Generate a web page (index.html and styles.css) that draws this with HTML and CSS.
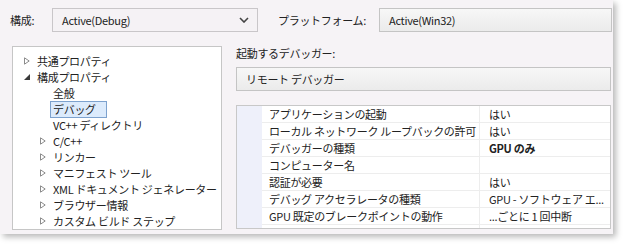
FILE: index.html
```html
<!DOCTYPE html>
<html lang="ja">
<head>
<meta charset="utf-8">
<link rel="stylesheet" href="styles.css">
</head>
<body>
<div class="dialog">
  <div class="toprow">
    <span class="lbl lbl-config">構成:</span>
    <div class="combo combo-config">
      <span>Active(Debug)</span>
      <svg class="chev" width="10" height="6" viewBox="0 0 10 6"><path d="M1 1 L5 5 L9 1" fill="none" stroke="#444" stroke-width="1.6"/></svg>
    </div>
    <span class="lbl lbl-platform">プラットフォーム:</span>
    <div class="combo combo-platform"><span>Active(Win32)</span></div>
  </div>
  <div class="main">
    <div class="tree">
      <div class="node l1"><svg class="tri" width="6" height="8" viewBox="0 0 6 8"><path d="M0.5 0.8 L5.2 4 L0.5 7.2 Z" fill="none" stroke="#8c8c8c" stroke-width="1"/></svg><span>共通プロパティ</span></div>
      <div class="node l1"><svg class="tri" width="6" height="8" viewBox="0 0 6 8"><path d="M0 7 L6 7 L6 1 Z" fill="#3a3a3a"/></svg><span>構成プロパティ</span></div>
      <div class="node l2 leaf"><span>全般</span></div>
      <div class="node l2 leaf"><span class="sel">デバッグ</span></div>
      <div class="node l2 leaf"><span>VC++ ディレクトリ</span></div>
      <div class="node l2"><svg class="tri" width="6" height="8" viewBox="0 0 6 8"><path d="M0.5 0.8 L5.2 4 L0.5 7.2 Z" fill="none" stroke="#8c8c8c" stroke-width="1"/></svg><span>C/C++</span></div>
      <div class="node l2"><svg class="tri" width="6" height="8" viewBox="0 0 6 8"><path d="M0.5 0.8 L5.2 4 L0.5 7.2 Z" fill="none" stroke="#8c8c8c" stroke-width="1"/></svg><span>リンカー</span></div>
      <div class="node l2"><svg class="tri" width="6" height="8" viewBox="0 0 6 8"><path d="M0.5 0.8 L5.2 4 L0.5 7.2 Z" fill="none" stroke="#8c8c8c" stroke-width="1"/></svg><span>マニフェスト ツール</span></div>
      <div class="node l2"><svg class="tri" width="6" height="8" viewBox="0 0 6 8"><path d="M0.5 0.8 L5.2 4 L0.5 7.2 Z" fill="none" stroke="#8c8c8c" stroke-width="1"/></svg><span>XML ドキュメント ジェネレーター</span></div>
      <div class="node l2"><svg class="tri" width="6" height="8" viewBox="0 0 6 8"><path d="M0.5 0.8 L5.2 4 L0.5 7.2 Z" fill="none" stroke="#8c8c8c" stroke-width="1"/></svg><span>ブラウザー情報</span></div>
      <div class="node l2"><svg class="tri" width="6" height="8" viewBox="0 0 6 8"><path d="M0.5 0.8 L5.2 4 L0.5 7.2 Z" fill="none" stroke="#8c8c8c" stroke-width="1"/></svg><span>カスタム ビルド ステップ</span></div>
    </div>
    <div class="right">
      <div class="lbl-debugger">起動するデバッガー:</div>
      <div class="combo combo-debugger"><span>リモート デバッガー</span></div>
      <div class="grid">
        <div class="margin"></div>
        <div class="rows">
          <div class="row"><div class="name">アプリケーションの起動</div><div class="val">はい</div></div>
          <div class="row"><div class="name">ローカル ネットワーク ループバックの許可</div><div class="val">はい</div></div>
          <div class="row"><div class="name">デバッガーの種類</div><div class="val bold">GPU のみ</div></div>
          <div class="row"><div class="name">コンピューター名</div><div class="val"></div></div>
          <div class="row"><div class="name">認証が必要</div><div class="val">はい</div></div>
          <div class="row"><div class="name">デバッグ アクセラレータの種類</div><div class="val">GPU - ソフトウェア エ...</div></div>
          <div class="row"><div class="name">GPU 既定のブレークポイントの動作</div><div class="val">...ごとに 1 回中断</div></div>
          <div class="filler"><div class="name"></div><div class="val"></div></div>
        </div>
      </div>
    </div>
  </div>
</div>
</body>
</html>
```
FILE: styles.css
```css
* { box-sizing: border-box; }
html, body { margin: 0; padding: 0; background: #ffffff; }
body {
  font-family: "Noto Sans CJK JP", "Noto Sans", sans-serif;
  font-size: 11px;
  letter-spacing: -0.3px;
  color: #222222;
  width: 623px;
  height: 245px;
  overflow: hidden;
}
.dialog {
  width: 613px;
  height: 234px;
  background: #f6f3f6;
  box-shadow: 3px 3px 6px rgba(0,0,0,0.28);
  padding: 8px 0 0 0;
}
.toprow {
  display: flex;
  align-items: center;
  height: 24px;
}
.lbl-config { width: 52px; padding-left: 10px; }
.combo {
  height: 24px;
  border: 1px solid #c9c6c9;
  display: flex;
  align-items: center;
  padding-left: 9px;
  line-height: 1;
}
.combo-config {
  width: 206px;
  background: #f5f2f5;
  justify-content: space-between;
  padding-right: 8px;
}
.chev { display: block; }
.lbl-platform { margin-left: 20px; width: 101px; }
.combo-platform {
  flex: 1;
  margin-right: 1px;
  background: linear-gradient(#f7f7f7, #ebebeb);
  border-color: #c4c4c4;
}
.main {
  display: flex;
  margin-top: 14px;
  padding-left: 12px;
}
.tree {
  width: 210px;
  height: 184px;
  background: #ffffff;
  border: 1px solid #c6c6c6;
  padding-top: 6px;
}
.node {
  height: 16px;
  display: flex;
  align-items: center;
  line-height: 16px;
  white-space: nowrap;
}
.node.l1 { padding-left: 11px; }
.node.l2 { padding-left: 27px; }
.node.leaf { padding-left: 40px; }
.tri { display: block; margin-right: 7px; flex: none; }
.sel {
  background: #dcebfc;
  border: 1px solid #7da2ce;
  height: 17px;
  line-height: 15px;
  padding: 0 10px 0 2px;
  margin-left: -3px;
  margin-top: 1px;
}
.right {
  margin-left: 14px;
  flex: 1;
  display: flex;
  flex-direction: column;
}
.lbl-debugger { height: 21px; line-height: 14px; }
.combo-debugger {
  height: 24px;
  margin-right: 2px;
  background: linear-gradient(#f7f7f7, #ebebeb);
  border-color: #c4c4c4;
  padding-left: 9px;
}
.grid {
  margin-top: 14px;
  margin-right: 2px;
  height: 124px;
  border: 1px solid #c8c8c8;
  display: flex;
  background: #ffffff;
}
.margin { width: 25px; background: #eef0fa; }
.rows { flex: 1; display: flex; flex-direction: column; }
.row, .filler {
  display: flex;
  height: 17px;
  line-height: 16px;
  border-bottom: 1px solid #ededed;
}
.filler { flex: 1; border-bottom: none; }
.name {
  width: 218px;
  padding-left: 7px;
  border-right: 1px solid #ededed;
  white-space: nowrap;
  overflow: hidden;
}
.val {
  flex: 1;
  padding-left: 9px;
  white-space: nowrap;
  overflow: hidden;
}
.bold { font-weight: bold; }
```
